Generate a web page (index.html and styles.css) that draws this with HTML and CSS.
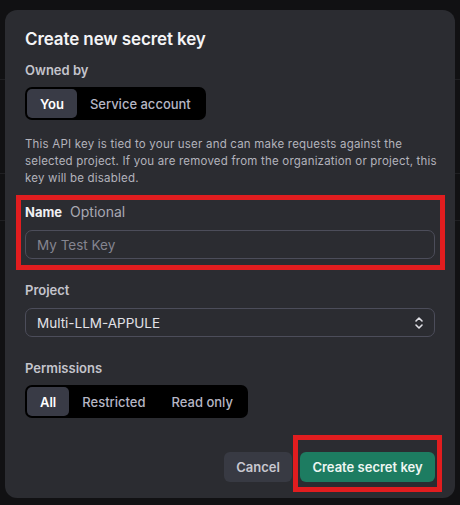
FILE: index.html
```html
<!DOCTYPE html>
<html lang="en">
<head>
<meta charset="utf-8">
<title>Create new secret key</title>
<link rel="stylesheet" href="styles.css">
</head>
<body>
<div class="dialog">
  <h1 class="title">Create new secret key</h1>
  <div class="label">Owned by</div>
  <div class="segment">
    <button class="seg-btn active">You</button>
    <button class="seg-btn">Service account</button>
  </div>
  <p class="desc">This API key is tied to your user and can make requests against the selected project. If you are removed from the organization or project, this key will be disabled.</p>
  <div class="field highlight">
    <div class="label"><span class="strong">Name</span><span class="optional">Optional</span></div>
    <div class="input placeholder">My Test Key</div>
  </div>
  <div class="label gap-lg">Project</div>
  <div class="input select">
    <span class="value">Multi-LLM-APPULE</span>
    <svg class="chev" width="10" height="14" viewBox="0 0 10 14" fill="none" stroke="currentColor" stroke-width="1.6" stroke-linecap="round" stroke-linejoin="round"><path d="M2 5 L5 2 L8 5"/><path d="M2 9 L5 12 L8 9"/></svg>
  </div>
  <div class="label gap-lg">Permissions</div>
  <div class="segment">
    <button class="seg-btn active">All</button>
    <button class="seg-btn">Restricted</button>
    <button class="seg-btn">Read only</button>
  </div>
  <div class="footer">
    <button class="btn cancel">Cancel</button>
    <button class="btn primary highlight-btn">Create secret key</button>
  </div>
</div>
</body>
</html>
```
FILE: styles.css
```css
* { box-sizing: border-box; }
html, body { margin: 0; padding: 0; }
body {
  width: 460px;
  height: 505px;
  background-color: #111113;
  background-image:
    linear-gradient(#1f1f22, #1f1f22),
    linear-gradient(#1f1f22, #1f1f22),
    linear-gradient(#1f1f22, #1f1f22);
  background-repeat: no-repeat;
  background-size: 100% 1px;
  background-position: 0 79px, 0 173px, 0 220px;
  font-family: Inter, "Noto Sans", sans-serif;
  color: #ececf1;
  padding: 10px 5px 7px 5px;
}
.dialog {
  width: 450px;
  height: 488px;
  background: #2b2c31;
  border-radius: 12px;
  padding: 18px 20px 15px 20px;
  display: flex;
  flex-direction: column;
  align-items: flex-start;
}
.title {
  margin: 0;
  font-size: 17px;
  line-height: 22px;
  font-weight: 600;
  color: #f4f4f6;
  letter-spacing: -0.1px;
}
.label {
  margin-top: 11px;
  font-size: 13px;
  line-height: 18px;
  font-weight: 600;
  color: #c4c4cc;
}
.gap-lg { margin-top: 22px; }
.segment {
  margin-top: 8px;
  display: flex;
  background: #000;
  border-radius: 7px;
  padding: 2px;
  height: 33px;
}
.seg-btn {
  font-family: inherit;
  border: 0;
  background: transparent;
  color: #b6b6c4;
  font-size: 13px;
  font-weight: 500;
  padding: 0 13px;
  height: 29px;
  border-radius: 5px;
  cursor: pointer;
}
.seg-btn.active {
  background: #393b46;
  color: #ffffff;
  font-weight: 600;
}
.desc {
  margin: 16px 0 0 0;
  font-size: 11.5px;
  line-height: 17px;
  letter-spacing: 0.2px;
  color: #b3b3bc;
  width: 412px;
}
.field {
  margin-top: 16px;
  width: 410px;
  position: relative;
}
.field .label { margin-top: 0; }
.strong { color: #f0f0f3; font-weight: 700; }
.optional { color: #a9a9b3; font-weight: 400; font-size: 14px; margin-left: 8px; }
.highlight::after {
  content: "";
  position: absolute;
  top: -8px;
  left: -9px;
  right: -10px;
  bottom: -11px;
  border: 5px solid #e11d1f;
  pointer-events: none;
}
.input {
  margin-top: 9px;
  width: 410px;
  height: 29px;
  border: 1px solid #4c4d5a;
  border-radius: 7px;
  padding: 0 11px;
  display: flex;
  align-items: center;
  font-size: 13.5px;
}
.placeholder { color: #858590; }
.select { justify-content: space-between; color: #e2e2e8; }
.chev { color: #e0e0e6; margin-right: -1px; }
.footer {
  margin-top: 34px;
  width: 410px;
  display: flex;
  justify-content: flex-end;
  gap: 8px;
}
.btn {
  font-family: inherit;
  border: 0;
  height: 30px;
  border-radius: 6px;
  font-size: 13px;
  font-weight: 600;
  padding: 0;
  white-space: nowrap;
  cursor: pointer;
}
.cancel {
  background: #383a43;
  color: #c8c8d0;
  width: 68px;
}
.primary {
  background: #1d7c61;
  color: #eef6f2;
  width: 135px;
}
.highlight-btn { position: relative; }
.highlight-btn::after {
  content: "";
  position: absolute;
  top: -17px;
  left: -7px;
  right: -7px;
  bottom: -10px;
  border: 5px solid #e11d1f;
  pointer-events: none;
}
```
